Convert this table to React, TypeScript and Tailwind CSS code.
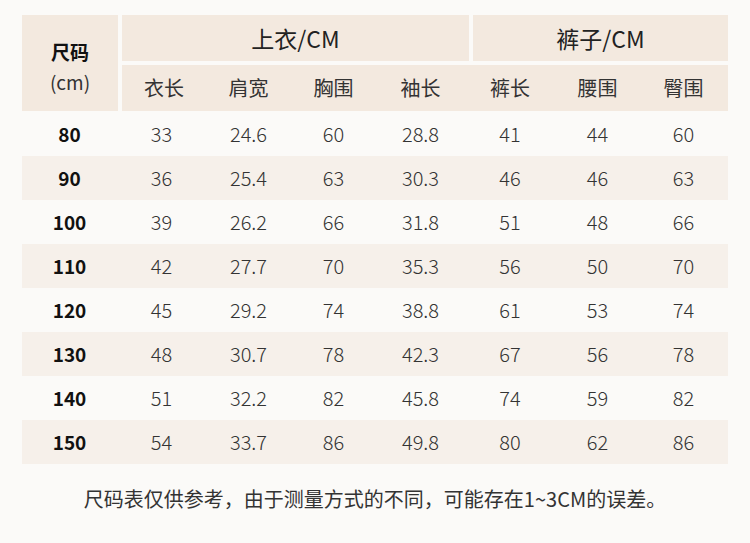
import React from "react";

const rows: (string | number)[][] = [
  ["80", "33", "24.6", "60", "28.8", "41", "44", "60"],
  ["90", "36", "25.4", "63", "30.3", "46", "46", "63"],
  ["100", "39", "26.2", "66", "31.8", "51", "48", "66"],
  ["110", "42", "27.7", "70", "35.3", "56", "50", "70"],
  ["120", "45", "29.2", "74", "38.8", "61", "53", "74"],
  ["130", "48", "30.7", "78", "42.3", "67", "56", "78"],
  ["140", "51", "32.2", "82", "45.8", "74", "59", "82"],
  ["150", "54", "33.7", "86", "49.8", "80", "62", "86"],
];

const subs = ["衣长", "肩宽", "胸围", "袖长", "裤长", "腰围", "臀围"];

export default function App() {
  return (
    <div
      className="w-[750px] h-[543px] bg-[#fbfaf8] pt-[15px] px-[22px] overflow-hidden"
      style={{ fontFamily: '"Noto Sans CJK SC", "Noto Sans", sans-serif' }}
    >
      {/* header */}
      <div className="flex gap-[4px] h-[96px]">
        <div className="w-[96px] bg-[#f3e9df] flex flex-col items-center justify-center pt-[8px]">
          <div className="text-[19px] font-bold text-[#111] leading-[30px]">尺码</div>
          <div className="text-[19px] text-[#333] leading-[30px]">(cm)</div>
        </div>
        <div className="flex-1 flex flex-col gap-[4px]">
          <div className="flex gap-[4px] h-[46px]">
            <div className="w-[347px] bg-[#f3e9df] flex items-center justify-center text-[23px] text-[#222]">
              上衣/CM
            </div>
            <div className="flex-1 bg-[#f3e9df] flex items-center justify-center text-[23px] text-[#222]">
              裤子/CM
            </div>
          </div>
          <div className="flex-1 bg-[#f3e9df] grid grid-cols-[84px_85px_85px_89px_90px_85px_87px] items-center">
            {subs.map((s) => (
              <div key={s} className="text-center text-[20px] text-[#333]">
                {s}
              </div>
            ))}
          </div>
        </div>
      </div>

      {/* data */}
      <div className="mt-[1px] flex flex-col">
        {rows.map((r, i) => (
          <div
            key={i}
            className={`grid grid-cols-[95px_89px_85px_85px_89px_90px_85px_87px] items-center h-[44px] ${
              i % 2 === 1 ? "bg-[#f6f0ea]" : ""
            }`}
          >
            {r.map((c, j) => (
              <div
                key={j}
                className={
                  j === 0
                    ? "text-center text-[19px] font-bold text-[#111]"
                    : "text-center text-[20px] font-light text-[#333]"
                }
              >
                {c}
              </div>
            ))}
          </div>
        ))}
      </div>

      <div className="mt-[20px] text-center text-[20px] text-[#333]">
        尺码表仅供参考，由于测量方式的不同，可能存在1~3CM的误差。
      </div>
    </div>
  );
}
